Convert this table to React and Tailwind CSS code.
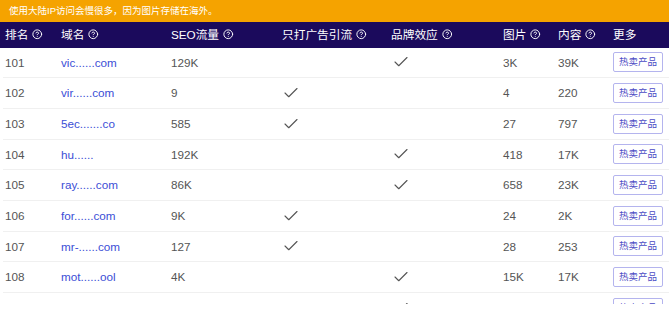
import React from "react";

const rows = [
  ["101", "vic......com", "129K", false, true, "3K", "39K"],
  ["102", "vir......com", "9", true, false, "4", "220"],
  ["103", "5ec.......co", "585", true, false, "27", "797"],
  ["104", "hu......", "192K", false, true, "418", "17K"],
  ["105", "ray......com", "86K", false, true, "658", "23K"],
  ["106", "for......com", "9K", true, false, "24", "2K"],
  ["107", "mr-......com", "127", true, false, "28", "253"],
  ["108", "mot......ool", "4K", false, true, "15K", "17K"],
  ["109", "gre......com", "37K", false, true, "33", "6K"],
];

const cols = "grid grid-cols-[56px_110px_111px_109px_112px_55px_55px_1fr] pl-[5px]";

function Help() {
  return (
    <svg width="10.5" height="10.5" viewBox="0 0 24 24" fill="none" stroke="currentColor" strokeWidth="2.2" strokeLinecap="round" strokeLinejoin="round" className="ml-[4px] shrink-0">
      <circle cx="12" cy="12" r="10" />
      <path d="M9.09 9a3 3 0 0 1 5.83 1c0 2-3 3-3 3" />
      <path d="M12 17h.01" />
    </svg>
  );
}

function Check({ className = "" }) {
  return (
    <svg width="18" height="18" viewBox="0 0 24 24" fill="none" stroke="#555" strokeWidth="1.5" strokeLinecap="round" strokeLinejoin="round" className={className}>
      <path d="M20 6 9 17l-5-5" />
    </svg>
  );
}

function H({ children, help = true }) {
  return (
    <div className="flex items-center">
      <span>{children}</span>
      {help && <Help />}
    </div>
  );
}

export default function App() {
  return (
    <div
      className="w-[669px] h-[304px] overflow-hidden bg-white"
      style={{ fontFamily: '"Liberation Sans", Arial, "Noto Sans CJK SC", sans-serif' }}
    >
      <div className="h-[22px] bg-[#f5a300] flex items-center pl-[9px] text-white text-[9.5px]">
        使用大陆IP访问会慢很多，因为图片存储在海外。
      </div>
      <div className={`${cols} h-[25.5px] items-center bg-[#1b0a5c] text-white text-[11.7px]`}>
        <H>排名</H>
        <H>域名</H>
        <H>SEO流量</H>
        <H>只打广告引流</H>
        <H>品牌效应</H>
        <H>图片</H>
        <H>内容</H>
        <H help={false}>更多</H>
      </div>
      <div>
        {rows.map((r) => (
          <div key={r[0]} className="ml-[3px] border-b border-[#f0f0f0]">
            <div className={`${cols} !pl-[2px] h-[29.7px] items-center text-[11.7px] text-[#555]`}>
              <div>{r[0]}</div>
              <div className="text-[#3b4ed6]">{r[1]}</div>
              <div>{r[2]}</div>
              <div>{r[3] && <Check className="ml-[0px]" />}</div>
              <div>{r[4] && <Check className="ml-[1px]" />}</div>
              <div>{r[5]}</div>
              <div>{r[6]}</div>
              <div>
                <button className="w-[50px] h-[20px] border border-[#b4b4ee] rounded-[2px] bg-white text-[#4b4bc4] text-[9.5px] flex items-center justify-center">
                  热卖产品
                </button>
              </div>
            </div>
          </div>
        ))}
      </div>
    </div>
  );
}
